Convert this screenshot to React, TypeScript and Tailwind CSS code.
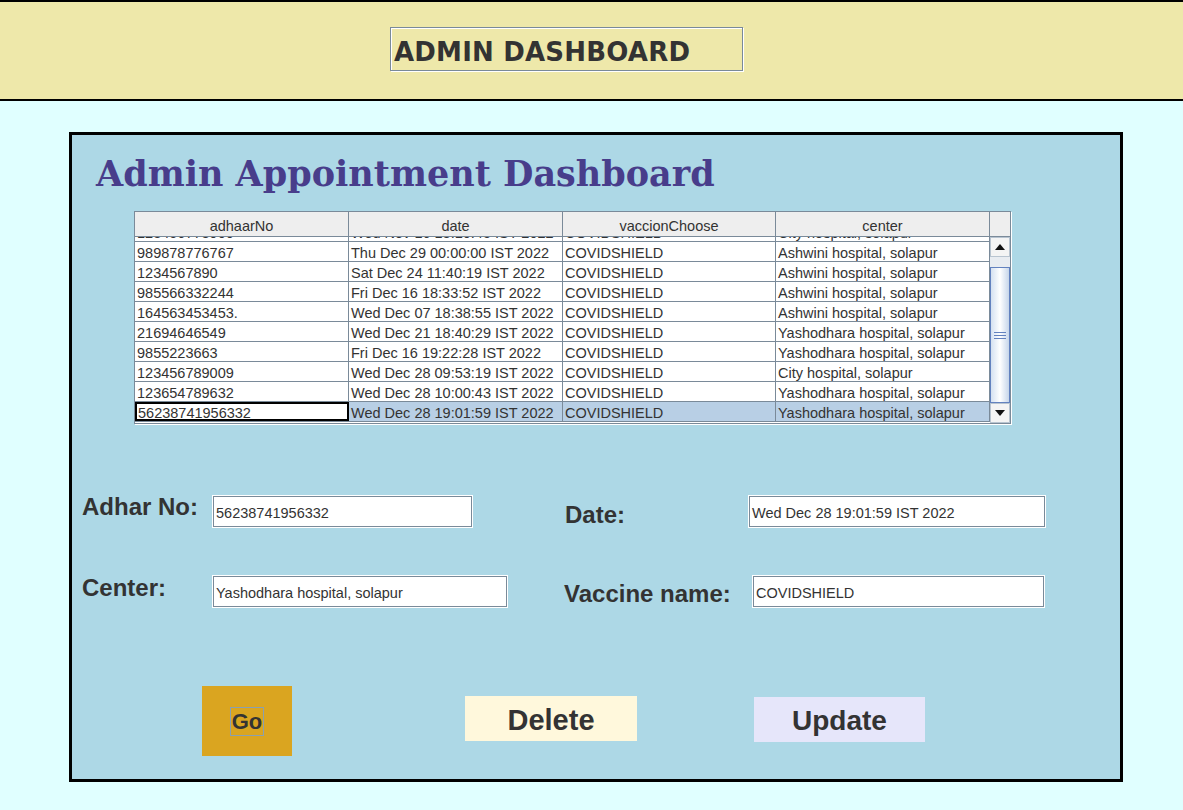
import React from 'react';

type Row = {
  adhaarNo: string;
  date: string;
  vaccine: string;
  center: string;
};

const rows: Row[] = [
  { adhaarNo: '123456778900', date: 'Wed Nov 16 18:10:45 IST 2022', vaccine: 'COVIDSHIELD', center: 'City hospital, solapur' },
  { adhaarNo: '989878776767', date: 'Thu Dec 29 00:00:00 IST 2022', vaccine: 'COVIDSHIELD', center: 'Ashwini hospital, solapur' },
  { adhaarNo: '1234567890', date: 'Sat Dec 24 11:40:19 IST 2022', vaccine: 'COVIDSHIELD', center: 'Ashwini hospital, solapur' },
  { adhaarNo: '985566332244', date: 'Fri Dec 16 18:33:52 IST 2022', vaccine: 'COVIDSHIELD', center: 'Ashwini hospital, solapur' },
  { adhaarNo: '164563453453.', date: 'Wed Dec 07 18:38:55 IST 2022', vaccine: 'COVIDSHIELD', center: 'Ashwini hospital, solapur' },
  { adhaarNo: '21694646549', date: 'Wed Dec 21 18:40:29 IST 2022', vaccine: 'COVIDSHIELD', center: 'Yashodhara hospital, solapur' },
  { adhaarNo: '9855223663', date: 'Fri Dec 16 19:22:28 IST 2022', vaccine: 'COVIDSHIELD', center: 'Yashodhara hospital, solapur' },
  { adhaarNo: '123456789009', date: 'Wed Dec 28 09:53:19 IST 2022', vaccine: 'COVIDSHIELD', center: 'City hospital, solapur' },
  { adhaarNo: '123654789632', date: 'Wed Dec 28 10:00:43 IST 2022', vaccine: 'COVIDSHIELD', center: 'Yashodhara hospital, solapur' },
  { adhaarNo: '56238741956332', date: 'Wed Dec 28 19:01:59 IST 2022', vaccine: 'COVIDSHIELD', center: 'Yashodhara hospital, solapur' },
];

const headers = ['adhaarNo', 'date', 'vaccionChoose', 'center'];
const colWidths = ['w-[214px]', 'w-[214px]', 'w-[213px]', 'w-[214px]'];

const Field = ({ value, width }: { value: string; width: string }) => (
  <div
    className={`${width} h-[31px] flex items-center pl-[2px] pt-[3px] bg-white border border-[#7a8a99] ring-1 ring-white text-[14.5px] leading-[18px] text-[#333] font-['Liberation_Sans',Arial,sans-serif]`}
  >
    {value}
  </div>
);

const ScrollBar = () => (
  <div className="w-[20px] h-full flex flex-col bg-[#eeeeee]">
    {/* up arrow */}
    <div className="h-[20px] flex items-center justify-center bg-[#f4f4f4] border border-[#b8c4d0]">
      <svg width="10" height="6" viewBox="0 0 10 6">
        <path d="M0 6 L5 0 L10 6 Z" fill="#111" />
      </svg>
    </div>
    {/* track + thumb */}
    <div className="flex-1 flex flex-col pt-[10px] bg-[#e8ecf1]">
      <div className="flex-1 flex items-center justify-center border border-[#6382bf] bg-gradient-to-r from-[#d5e1f1] via-white to-[#c7d6ea]">
        <div className="flex flex-col gap-[2px]">
          <div className="w-[12px] h-[1px] bg-[#6382bf]" />
          <div className="w-[12px] h-[1px] bg-[#6382bf]" />
          <div className="w-[12px] h-[1px] bg-[#6382bf]" />
        </div>
      </div>
    </div>
    {/* down arrow */}
    <div className="h-[20px] flex items-center justify-center bg-[#f4f4f4] border border-[#b8c4d0]">
      <svg width="10" height="6" viewBox="0 0 10 6">
        <path d="M0 0 L5 6 L10 0 Z" fill="#111" />
      </svg>
    </div>
  </div>
);

const AppointmentTable = () => (
  <div className="w-[877px] h-[213px] border border-[#7a8a99] shadow-[1px_1px_0_white] bg-white flex flex-col font-['Liberation_Sans',Arial,sans-serif] text-[14.5px] leading-[17px] text-[#333]">
    {/* Header */}
    <div className="h-[25px] flex bg-[#eeeeee] border-b border-[#7a8a99]">
      {headers.map((h, i) => (
        <div
          key={h}
          className={`${colWidths[i]} h-full flex items-center justify-center pt-[4px] border-r border-[#7a8a99]`}
        >
          {h}
        </div>
      ))}
      <div className="w-[20px]" />
    </div>

    {/* Body */}
    <div className="flex-1 flex overflow-hidden">
      <div className="w-[855px] overflow-hidden">
        <div className="-mt-[15px]">
          {rows.map((r, idx) => {
            const selected = idx === rows.length - 1;
            return (
              <div
                key={r.adhaarNo + idx}
                className={`h-[20px] flex border-b border-[#7a8a99] ${selected ? 'bg-[#b8cfe5]' : 'bg-white'}`}
              >
                <div
                  className={`${colWidths[0]} pl-[1px] pt-[2px] ${
                    selected ? 'bg-white border-2 border-black pt-px' : 'pl-[2px] pt-[3px] border-r border-[#7a8a99]'
                  }`}
                >
                  {r.adhaarNo}
                </div>
                <div className={`${colWidths[1]} pl-[2px] pt-[3px] border-r border-[#7a8a99]`}>{r.date}</div>
                <div className={`${colWidths[2]} pl-[2px] pt-[3px] border-r border-[#7a8a99]`}>{r.vaccine}</div>
                <div className={`${colWidths[3]} pl-[2px] pt-[3px] border-r border-[#7a8a99]`}>{r.center}</div>
              </div>
            );
          })}
        </div>
      </div>
      <ScrollBar />
    </div>
  </div>
);

export default function App() {
  const label = "font-['Liberation_Sans',Arial,sans-serif] font-bold text-[24px] leading-6 text-[#333]";

  return (
    <div className="min-h-screen w-full bg-[#e0ffff] pb-[28px]">
      {/* Top bar */}
      <header className="h-[101px] bg-[#eee8aa] border-t-2 border-b-2 border-black pt-[25px]">
        <div className="ml-[390px] w-[353px] h-[44px] flex items-center pl-[3px] pt-[5px] border border-[#7a8a99] shadow-[inset_1px_1px_0_white,1px_1px_0_white] font-['DejaVu_Sans',sans-serif] font-bold text-[26px] leading-[30px] tracking-[0.2px] text-[#333]">
          ADMIN DASHBOARD
        </div>
      </header>

      {/* Panel */}
      <main className="ml-[69px] mt-[31px] w-[1054px] h-[650px] border-[3px] border-black bg-[#add8e6]">
        <h1 className="ml-[24px] mt-[21px] leading-[35px] font-['DejaVu_Serif',serif] font-bold text-[35px] text-[#483d8b]">
          Admin Appointment Dashboard
        </h1>

        <div className="ml-[62px] mt-[20px]">
          <AppointmentTable />
        </div>

        {/* Form */}
        <div className="ml-[10px] mt-[72px] flex items-start">
          <div className={`${label} w-[131px] -mt-px`}>Adhar No:</div>
          <Field value="56238741956332" width="w-[259px]" />
          <div className={`${label} ml-[93px] w-[184px] mt-[7px]`}>Date:</div>
          <Field value="Wed Dec 28 19:01:59 IST 2022" width="w-[296px]" />
        </div>

        <div className="ml-[10px] mt-[49px] flex items-start">
          <div className={`${label} w-[131px] mt-0`}>Center:</div>
          <Field value="Yashodhara hospital, solapur" width="w-[294px]" />
          <div className={`${label} ml-[57px] w-[189px] mt-[6px]`}>Vaccine name:</div>
          <Field value="COVIDSHIELD" width="w-[291px]" />
        </div>

        {/* Buttons */}
        <div className="ml-[130px] mt-[79px] flex items-start font-['Liberation_Sans',Arial,sans-serif] font-bold text-[#333]">
          <button className="w-[90px] h-[70px] flex items-center justify-center bg-[#daa520]">
            <span className="w-[34px] h-[29px] flex items-center justify-center pt-px border border-[#8aa0b0] text-[22px] leading-[24px]">
              Go
            </span>
          </button>
          <button className="ml-[173px] mt-[10px] w-[172px] h-[45px] flex items-center justify-center pt-[3px] bg-[#fff8dc] text-[29px] leading-[32px]">
            Delete
          </button>
          <button className="ml-[117px] mt-[11px] w-[171px] h-[45px] flex items-center justify-center pt-[3px] bg-[#e6e6fa] text-[28px] leading-[32px]">
            Update
          </button>
        </div>
      </main>
    </div>
  );
}
